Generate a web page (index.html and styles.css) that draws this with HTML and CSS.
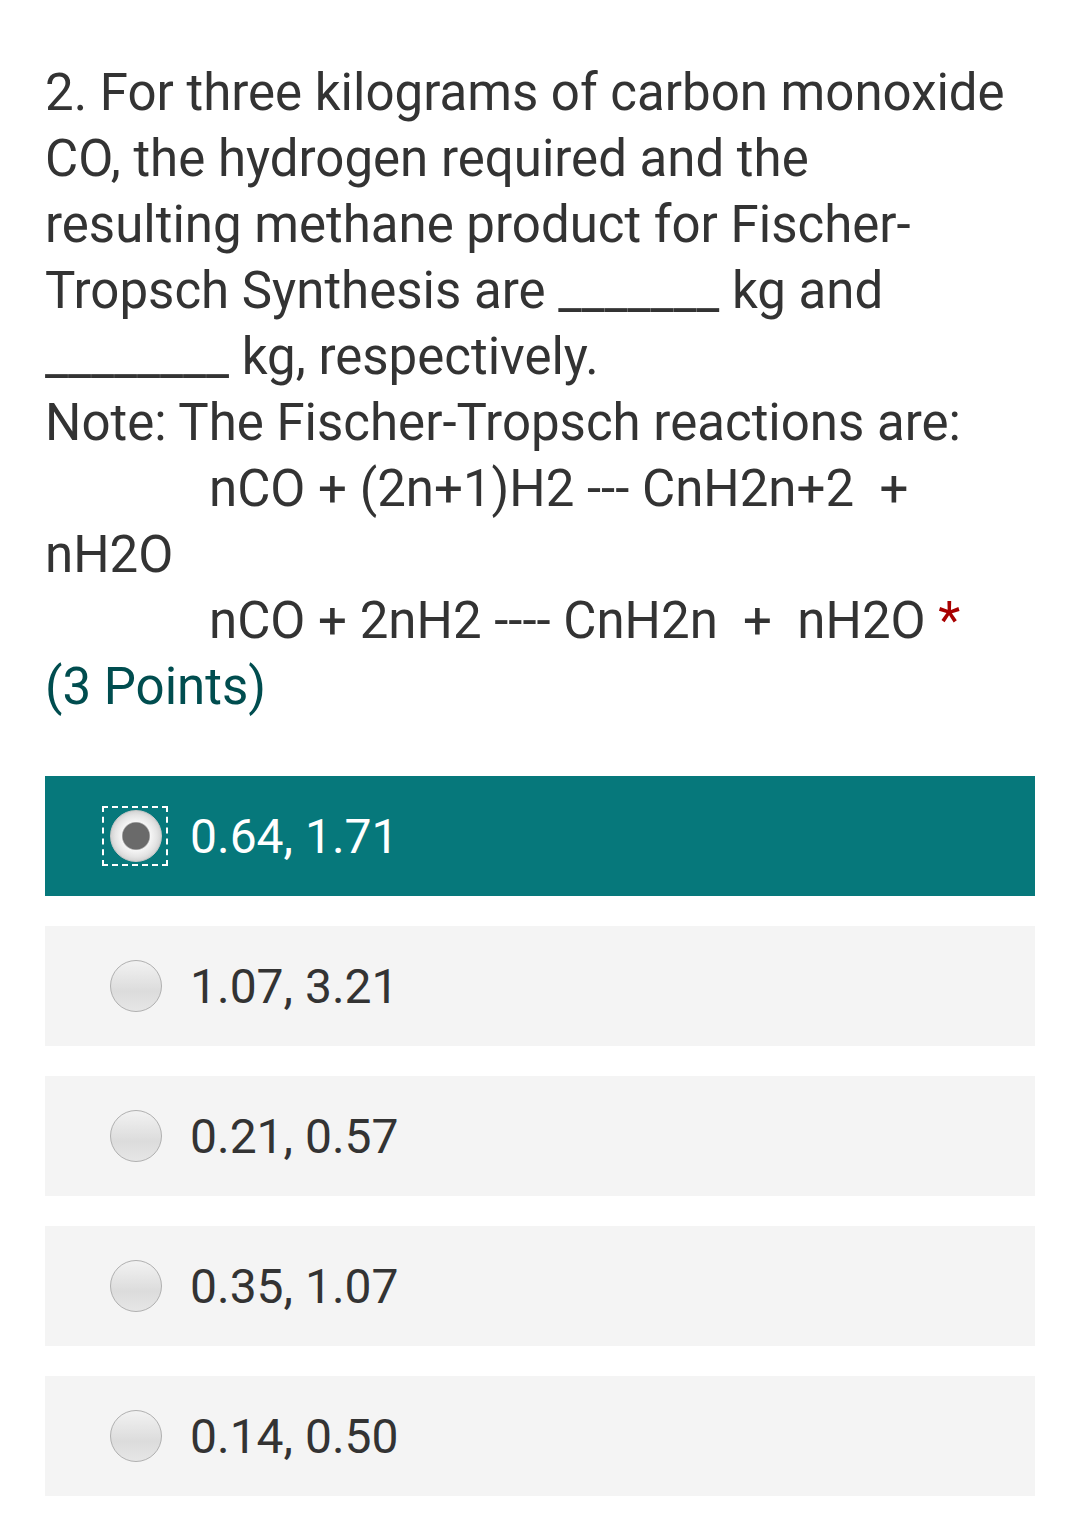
FILE: index.html
```html
<!DOCTYPE html>
<html>
<head>
<meta charset="utf-8">
<link rel="stylesheet" href="styles.css">
</head>
<body>
<div class="page">
  <div class="question">
    <div class="line">2. For three kilograms of carbon monoxide</div>
    <div class="line">CO, the hydrogen required and the</div>
    <div class="line">resulting methane product for Fischer-</div>
    <div class="line">Tropsch Synthesis are _______ kg and</div>
    <div class="line">________ kg, respectively.</div>
    <div class="line">Note: The Fischer-Tropsch reactions are:</div>
    <div class="line indent">nCO + (2n+1)H2 --- CnH2n+2&nbsp; +</div>
    <div class="line">nH2O</div>
    <div class="line indent">nCO + 2nH2 ---- CnH2n&nbsp; +&nbsp; nH2O <span class="req">*</span></div>
    <div class="line points">(3 Points)</div>
  </div>
  <div class="options">
    <div class="option selected">
      <span class="focus"><span class="radio checked"></span></span>
      <span class="label">0.64, 1.71</span>
    </div>
    <div class="option">
      <span class="focus"><span class="radio"></span></span>
      <span class="label">1.07, 3.21</span>
    </div>
    <div class="option">
      <span class="focus"><span class="radio"></span></span>
      <span class="label">0.21, 0.57</span>
    </div>
    <div class="option">
      <span class="focus"><span class="radio"></span></span>
      <span class="label">0.35, 1.07</span>
    </div>
    <div class="option">
      <span class="focus"><span class="radio"></span></span>
      <span class="label">0.14, 0.50</span>
    </div>
  </div>
</div>
</body>
</html>
```

FILE: styles.css
```css
html, body {
  margin: 0;
  padding: 0;
  background: #ffffff;
}
.page {
  width: 990px;
  padding: 60px 45px 0 45px;
  font-family: Roboto, "Noto Sans", sans-serif;
  color: #333333;
}
.question {
  font-size: 51px;
  line-height: 66px;
}
.line {
  white-space: nowrap;
}
.indent {
  padding-left: 164px;
}
.req {
  color: #a80000;
}
.points {
  color: #004d4f;
}
.options {
  margin-top: 56px;
  display: flex;
  flex-direction: column;
  gap: 30px;
}
.option {
  height: 120px;
  background: #f4f4f4;
  display: flex;
  align-items: center;
  padding-left: 57px;
}
.option.selected {
  background: #06787b;
  color: #ffffff;
}
.focus {
  width: 66px;
  height: 60px;
  display: flex;
  align-items: center;
  justify-content: center;
  border: 2px dashed transparent;
  box-sizing: border-box;
  margin-right: 22px;
}
.selected .focus {
  border-color: #ffffff;
}
.radio {
  width: 52px;
  height: 52px;
  margin-left: 2px;
  border-radius: 50%;
  box-sizing: border-box;
  border: 1px solid #b0b0b0;
  background: linear-gradient(#f2f2f2, #dcdcdc 60%, #e6e6e6);
}
.radio.checked {
  border-color: #c8c8c8;
  background: radial-gradient(circle, #6a6a6a 0, #6a6a6a 13px, #f5f5f5 14.5px, #e4e4e4 21px, #cfcfcf 26px);
}
.label {
  font-size: 48px;
}
```
